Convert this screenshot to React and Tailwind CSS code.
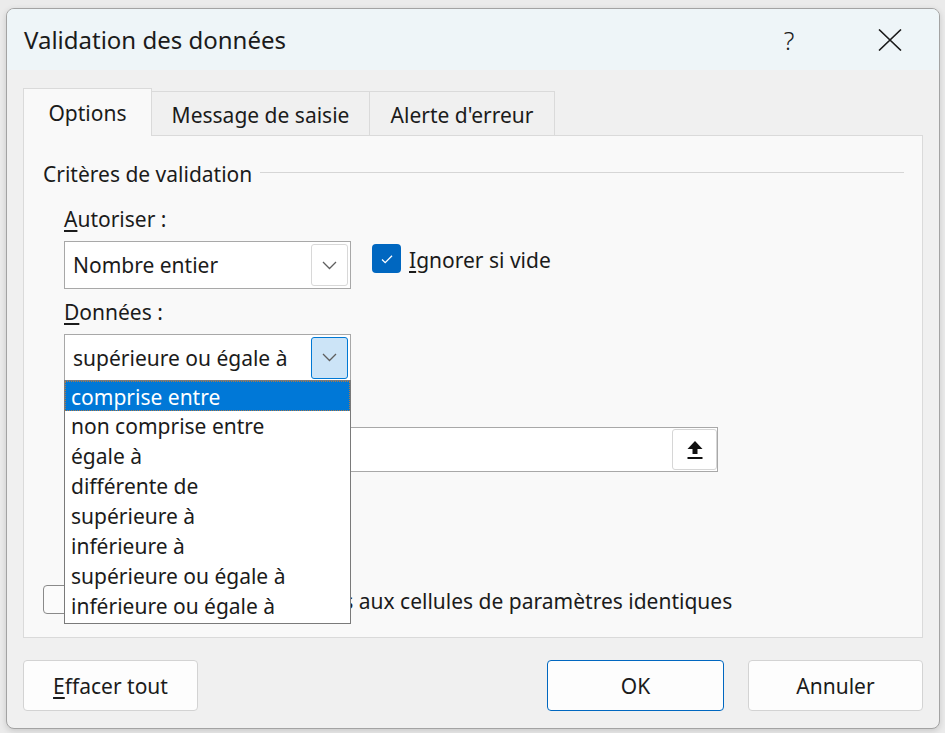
import { useState } from "react";

const Chevron = () => (
  <svg width="15" height="9" viewBox="0 0 15 9" fill="none">
    <polyline points="1,1 7.5,7.5 14,1" stroke="#5f5f5f" strokeWidth="1.3" />
  </svg>
);

const Combo = ({ value, active, children, height }) => (
  <div
    className={`relative flex w-[287px] items-center border border-[#a8a8a8] bg-white pl-[8px] pr-[2px] ${height}`}
  >
    <span className="flex-1 leading-[28px]">{value}</span>
    <div
      className={
        active
          ? "flex h-[42px] w-[37px] items-center justify-center rounded-[3px] border border-[#0078d4] bg-[#cce4f7]"
          : "flex h-[42px] w-[37px] items-center justify-center rounded-[3px] border border-[#d8d8d8] bg-white"
      }
    >
      <Chevron />
    </div>
    {children}
  </div>
);

const operators = [
  "comprise entre",
  "non comprise entre",
  "égale à",
  "différente de",
  "supérieure à",
  "inférieure à",
  "supérieure ou égale à",
  "inférieure ou égale à",
];

const Checkbox = ({ checked }) =>
  checked ? (
    <div className="flex h-[29px] w-[29px] items-center justify-center rounded-[4px] bg-[#0067c0]">
      <svg width="16" height="16" viewBox="0 0 16 16" fill="none">
        <path d="M3 8.5l3.2 3.2L13 4.8" stroke="white" strokeWidth="1.3" />
      </svg>
    </div>
  ) : (
    <div className="h-[29px] w-[29px] rounded-[4px] border border-[#8a8a8a] bg-[#fbfbfb]" />
  );

export default function App() {
  const [selected] = useState(0);

  return (
    <div className="h-[733px] w-[945px] bg-[#ebebeb] pl-[6px] pt-[8px] font-['Noto_Sans',sans-serif] text-[21px] text-[#1b1b1b]">
      <div className="flex h-[721px] w-[934px] flex-col overflow-hidden rounded-[8px] border border-[#a3a3a3] bg-[#f0f0f0] shadow-[0_2px_6px_rgba(0,0,0,0.15)]">
        {/* barre de titre */}
        <div className="flex h-[61px] items-center bg-[#eef5f8] pl-[17px] pr-[37px]">
          <span className="flex-1 text-[24px] leading-[32px]">Validation des données</span>
          <span className="w-[20px] text-center text-[25px] font-light leading-[32px]">?</span>
          <svg className="ml-[79px]" width="24" height="22" viewBox="0 0 24 22" fill="none">
            <path d="M1 0.5L23 21.5M23 0.5L1 21.5" stroke="#1b1b1b" strokeWidth="1.6" />
          </svg>
        </div>

        <div className="flex flex-col px-[16px] pt-[18px]">
          {/* onglets */}
          <div className="flex h-[47px] items-end">
            <div className="relative z-10 -mb-px h-[48px] w-[129px] border-l border-r border-t border-[#dadada] bg-[#f9f9f9] pt-[10px] text-center leading-[28px]">
              Options
            </div>
            <div className="h-[44px] w-[218px] border-r border-t border-[#dadada] pt-[9px] text-center leading-[28px]">
              Message de saisie
            </div>
            <div className="h-[44px] w-[185px] border-r border-t border-[#dadada] pt-[9px] text-center leading-[28px]">
              Alerte d'erreur
            </div>
          </div>

          {/* panneau */}
          <div className="flex h-[503px] w-[900px] flex-col border border-[#dadada] bg-[#f9f9f9] pt-[24px]">
            <div className="flex items-start pl-[19px] pr-[18px]">
              <span className="leading-[28px]">Critères de validation</span>
              <div className="ml-[8px] mt-[12px] h-px flex-1 bg-[#d6d6d6]" />
            </div>

            <div className="pl-[40px]">
              <div className="mt-[17px] leading-[28px]">
                <u className="underline-offset-[3px]">A</u>utoriser :
              </div>
              <div className="mt-[8px] flex items-start">
                <Combo value="Nombre entier" height="h-[48px]" />
                <div className="ml-[21px] mt-[2px] flex items-center">
                  <Checkbox checked />
                  <span className="ml-[8px] pt-[3px] leading-[28px]">
                    <u className="underline-offset-[3px]">I</u>gnorer si vide
                  </span>
                </div>
              </div>

              <div className="mt-[9px] leading-[28px]">
                <u className="underline-offset-[3px]">D</u>onnées :
              </div>
              <div className="mt-[8px]">
                <Combo value="supérieure ou égale à" active height="h-[47px]">
                  {/* liste déroulante ouverte */}
                  <div className="absolute left-[-1px] top-full z-20 w-[287px] border border-[#7a7a7a] bg-white pb-[2px]">
                    {operators.map((op, i) => (
                      <div
                        key={op}
                        className={
                          i === selected
                            ? "h-[30px] border border-dotted border-[#b07a45] bg-[#0078d7] pl-[5px] pt-[1px] leading-[28px] text-white"
                            : "h-[30px] pl-[6px] pt-[1px] leading-[29px]"
                        }
                      >
                        {op}
                      </div>
                    ))}
                  </div>
                </Combo>
              </div>

              <div className="mt-[10px] leading-[28px]">
                <u className="underline-offset-[3px]">M</u>inimum :
              </div>
              <div className="mt-[8px] flex h-[45px] w-[654px] items-center justify-end border border-[#a8a8a8] bg-white">
                <div className="flex h-[41px] w-[45px] items-center justify-center rounded-[3px] border border-[#d6d6d6] bg-white">
                  <svg width="18" height="22" viewBox="0 0 18 22">
                    <path d="M9 2L16.5 10H11.5V15H6.5V10H1.5Z" fill="#111" />
                    <rect x="1.5" y="18" width="15" height="2" fill="#111" />
                  </svg>
                </div>
              </div>
            </div>

            <div className="mt-[112px] flex items-center pl-[19px]">
              <Checkbox />
              <span className="ml-[8px] pt-[3px] leading-[28px]">
                Appliquer ces modifications aux cellules de paramètres identiques
              </span>
            </div>
          </div>

          {/* boutons */}
          <div className="mt-[22px] flex justify-between">
            <button className="h-[51px] w-[175px] rounded-[4px] border border-[#d3d3d3] bg-[#fdfdfd] leading-[28px]">
              <u className="underline-offset-[3px]">E</u>ffacer tout
            </button>
            <div className="flex gap-[24px]">
              <button className="h-[51px] w-[177px] rounded-[4px] border-[1.5px] border-[#0067c0] bg-[#fdfdfd] leading-[28px]">
                OK
              </button>
              <button className="h-[51px] w-[175px] rounded-[4px] border border-[#d3d3d3] bg-[#fdfdfd] leading-[28px]">
                Annuler
              </button>
            </div>
          </div>
        </div>
      </div>
    </div>
  );
}
